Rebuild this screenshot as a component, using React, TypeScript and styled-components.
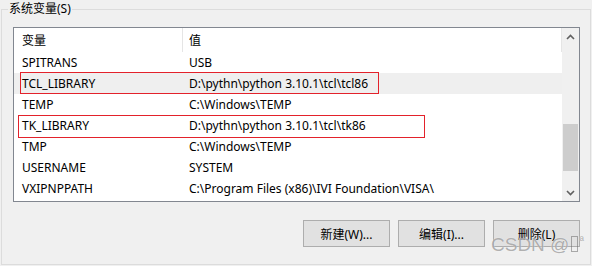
import styled, { createGlobalStyle } from "styled-components";

type Mark = { left: number; top: number; width: number; height: number };
type EnvVar = { name: string; value: string; selected?: boolean; mark?: Mark };

const vars: EnvVar[] = [
  { name: "SPITRANS", value: "USB" },
  {
    name: "TCL_LIBRARY",
    value: "D:\\pythn\\python 3.10.1\\tcl\\tcl86",
    selected: true,
    mark: { left: 6, top: -1, width: 359, height: 22 },
  },
  { name: "TEMP", value: "C:\\Windows\\TEMP" },
  {
    name: "TK_LIBRARY",
    value: "D:\\pythn\\python 3.10.1\\tcl\\tk86",
    mark: { left: 4, top: 0, width: 407, height: 23 },
  },
  { name: "TMP", value: "C:\\Windows\\TEMP" },
  { name: "USERNAME", value: "SYSTEM" },
  { name: "VXIPNPPATH", value: "C:\\Program Files (x86)\\IVI Foundation\\VISA\\" },
];

const GlobalStyle = createGlobalStyle`
  html, body {
    margin: 0;
    padding: 0;
    background: #f0f0f0;
    font-family: "Noto Sans", "Noto Sans CJK SC", sans-serif;
    font-size: 12px;
    color: #000;
  }
`;

const Page = styled.div`
  position: relative;
  width: 592px;
  height: 266px;
  padding-left: 1px;
  box-sizing: border-box;
`;

const Group = styled.fieldset`
  margin: 0;
  width: 590px;
  height: 265px;
  box-sizing: border-box;
  border: 1px solid #dcdcdc;
  padding: 9px 10px 0 11px;
`;

const Legend = styled.legend`
  margin-left: -5px;
  padding: 0 1px;
  line-height: 18px;
  font-size: 12px;
`;

const ListBox = styled.div`
  width: 567px;
  height: 175px;
  box-sizing: border-box;
  border: 1px solid #828790;
  background: #fff;
  display: flex;
`;

const ListContent = styled.div`
  width: 548px;
  display: flex;
  flex-direction: column;
`;

const Columns = styled.div<{ $selected?: boolean }>`
  position: relative;
  display: grid;
  grid-template-columns: 169px 1fr;
  height: 21px;
  align-items: center;
  background: ${(p) => (p.$selected ? "#efefef" : "transparent")};
  white-space: nowrap;
`;

const Header = styled(Columns)`
  height: 24px;
  align-items: stretch;
`;

const HeaderCell = styled.div<{ $first?: boolean }>`
  display: flex;
  align-items: center;
  padding-left: ${(p) => (p.$first ? "8px" : "6px")};
  border-right: 1px solid #e5e5e5;
`;

const Cell = styled.div<{ $first?: boolean }>`
  padding-left: ${(p) => (p.$first ? "8px" : "6px")};
`;

const RedMark = styled.div`
  position: absolute;
  box-sizing: border-box;
  border: 1px solid #e3222b;
  pointer-events: none;
`;

const ScrollBar = styled.div`
  width: 17px;
  background: #f0f0f0;
  display: flex;
  flex-direction: column;
`;

const ArrowButton = styled.div`
  height: 17px;
  display: flex;
  align-items: center;
  justify-content: center;
`;

const Track = styled.div`
  flex: 1;
  display: flex;
  flex-direction: column;
  padding: 0 1px;
`;

const Thumb = styled.div`
  margin-top: 79px;
  height: 47px;
  background: #cdcdcd;
`;

const ButtonRow = styled.div`
  display: flex;
  justify-content: flex-end;
  gap: 8px;
  width: 567px;
  margin-top: 18px;
`;

const Button = styled.button`
  width: 87px;
  height: 27px;
  box-sizing: border-box;
  border: 1px solid #adadad;
  background: #e1e1e1;
  font-family: inherit;
  font-size: 12px;
  color: #000;
  padding: 0;
`;

const Watermark = styled.div`
  position: absolute;
  left: 491px;
  top: 230px;
  font-family: "Liberation Sans", Arial, sans-serif;
  font-size: 19px;
  line-height: 22px;
  color: rgba(110, 110, 110, 0.55);
  text-shadow: 0 0 1px rgba(255, 255, 255, 0.9);
  white-space: nowrap;
  pointer-events: none;
`;

const Tofu = styled.span`
  display: inline-block;
  width: 5px;
  height: 14px;
  border: 1px solid rgba(110, 110, 110, 0.55);
  margin: 0 1px 0 2px;
  vertical-align: -1px;
`;

const Sup = styled.span`
  font-size: 12px;
  vertical-align: 6px;
`;

const Chevron = ({ down }: { down?: boolean }) => (
  <svg width="9" height="6" viewBox="0 0 9 6">
    <path
      d={down ? "M1 1 L4.5 4.5 L8 1" : "M1 5 L4.5 1.5 L8 5"}
      fill="none"
      stroke="#606060"
      strokeWidth="1.6"
    />
  </svg>
);

export default function App() {
  return (
    <>
      <GlobalStyle />
      <Page>
        <Group>
          <Legend>系统变量(S)</Legend>
          <ListBox>
            <ListContent>
              <Header>
                <HeaderCell $first>变量</HeaderCell>
                <HeaderCell>值</HeaderCell>
              </Header>
              {vars.map((v) => (
                <Columns key={v.name} $selected={v.selected}>
                  <Cell $first>{v.name}</Cell>
                  <Cell>{v.value}</Cell>
                  {v.mark && (
                    <RedMark
                      style={{
                        left: v.mark.left,
                        top: v.mark.top,
                        width: v.mark.width,
                        height: v.mark.height,
                      }}
                    />
                  )}
                </Columns>
              ))}
            </ListContent>
            <ScrollBar>
              <ArrowButton>
                <Chevron />
              </ArrowButton>
              <Track>
                <Thumb />
              </Track>
              <ArrowButton>
                <Chevron down />
              </ArrowButton>
            </ScrollBar>
          </ListBox>
          <ButtonRow>
            <Button>新建(W)...</Button>
            <Button>编辑(I)...</Button>
            <Button>删除(L)</Button>
          </ButtonRow>
        </Group>
        <Watermark>
          CSDN @<Tofu />
          <Sup>ª</Sup>
        </Watermark>
      </Page>
    </>
  );
}
